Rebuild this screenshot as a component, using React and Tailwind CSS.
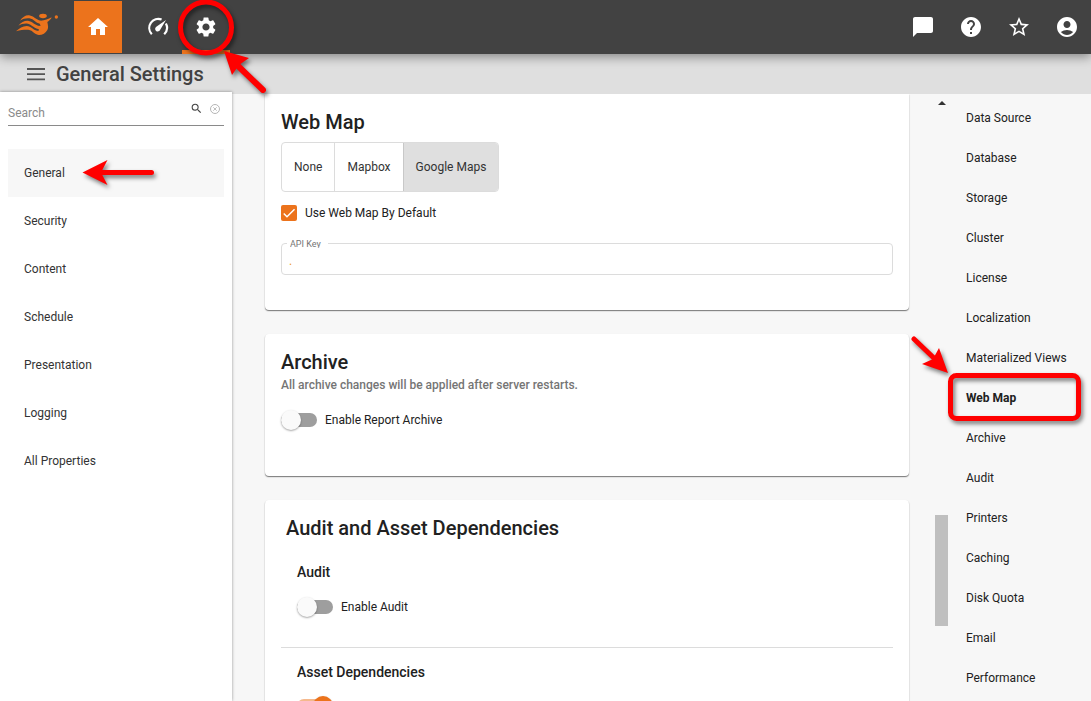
import React from "react";
import {
  MdHome,
  MdSettings,
  MdChatBubble,
  MdHelp,
  MdStarBorder,
  MdAccountCircle,
  MdSearch,
} from "react-icons/md";

const categories = ["General", "Security", "Content", "Schedule", "Presentation", "Logging", "All Properties"];

const sections = [
  "Data Source",
  "Database",
  "Storage",
  "Cluster",
  "License",
  "Localization",
  "Materialized Views",
  "Web Map",
  "Archive",
  "Audit",
  "Printers",
  "Caching",
  "Disk Quota",
  "Email",
  "Performance",
];

const markShadow = "drop-shadow-[2px_3px_2px_rgba(0,0,0,0.5)]";

function Logo() {
  return (
    <svg viewBox="0 0 180 132" className="h-11 w-15" fill="#ec731c" aria-hidden="true">
      <ellipse cx="105" cy="39" rx="11.5" ry="6.5" />
      <circle cx="145" cy="42" r="5" />
      <path d="M36 53C44 42 53 36 63 37C78 39 84 51 98 53L99 63C84 62 78 48 64 46C54 45 46 47 36 53Z" />
      <path d="M31 68C40 57 50 52 60 53C74 55 80 67 96 69L96 79C80 78 72 65 60 62C50 60 40 63 31 68Z" />
      <path d="M24 85C34 76 44 69 56 69C70 70 76 82 90 84L96 96C86 96 80 91 74 86C66 79 50 79 24 85Z" />
      <path d="M95 53C108 54 120 49 131 43C129 49 124 53 118 57C120 68 122 74 118 81C113 90 104 96 92 96L86 84L92 83L93 69L98 68L95 62Z" />
    </svg>
  );
}

function GaugeIcon() {
  return (
    <svg viewBox="0 0 24 24" className="size-6" fill="none" aria-hidden="true">
      <path d="M5.8 19.2A9 9 0 0 1 15.6 4.6M19.9 8.6A9 9 0 0 1 18.2 19.2" stroke="#fff" strokeWidth="2.2" />
      <path d="M20 5L14.2 14.7A2.6 2.6 0 1 1 10.3 11.7Z" fill="#fff" />
    </svg>
  );
}

function Switch({ label, checked = false, labelledBy }) {
  return (
    <label className="flex items-center gap-2 text-xs text-[#212121]">
      <input type="checkbox" role="switch" defaultChecked={checked} aria-labelledby={labelledBy} className="peer sr-only" />
      <span className="flex h-[14px] w-9 items-center rounded-full bg-[#9e9e9e] peer-checked:justify-end peer-checked:bg-[#f5b98d] [&>span]:bg-[#fafafa] peer-checked:[&>span]:bg-[#ec731c]">
        <span className="size-5 shrink-0 rounded-full shadow-[0_1px_2px_rgba(0,0,0,0.35)]" />
      </span>
      {label}
    </label>
  );
}

function Card({ children, className }) {
  return (
    <section className={"shrink-0 bg-white px-4 shadow-[0_1px_1px_rgba(0,0,0,0.45),0_1px_2px_rgba(0,0,0,0.12)] " + className}>
      {children}
    </section>
  );
}

function HeaderBar() {
  return (
    <header className="relative z-20 flex h-[54px] shrink-0 items-center justify-between bg-[#424242] shadow-[0_3px_10px_rgba(0,0,0,0.4)]">
      <div className="flex h-full items-center">
        <div className="flex w-[74px] pb-1 pl-2">
          <Logo />
        </div>
        <button aria-label="Home" className="flex h-[52px] w-12 items-center justify-center bg-[#ec731c] text-white">
          <MdHome className="size-6" />
        </button>
        <button aria-label="Monitoring" className="ml-3 flex h-full w-12 items-center justify-center">
          <GaugeIcon />
        </button>
        <button
          aria-label="Settings"
          className="relative flex h-full w-12 items-center justify-center border-b-4 border-t-4 border-b-[#ec731c] border-t-transparent text-white"
        >
          <MdSettings className="size-6" />
          <svg viewBox="0 0 96 102" className={"pointer-events-none absolute -left-1 -top-1 h-[102px] w-24 max-w-none " + markShadow} aria-hidden="true">
            <circle cx="28" cy="27.5" r="25.5" fill="none" stroke="#f00" strokeWidth="5" />
            <path d="M57 63L85 90" stroke="#f00" strokeWidth="6" strokeLinecap="round" />
            <path d="M46 51L71 58L61 65L54 75Z" fill="#f00" />
          </svg>
        </button>
      </div>
      <div className="flex items-center text-white">
        <button aria-label="Messages" className="flex size-12 items-center justify-center">
          <MdChatBubble className="size-6" />
        </button>
        <button aria-label="Help" className="flex size-12 items-center justify-center">
          <MdHelp className="size-6" />
        </button>
        <button aria-label="Favorites" className="flex size-12 items-center justify-center">
          <MdStarBorder className="size-6" />
        </button>
        <button aria-label="Account" className="flex size-12 items-center justify-center">
          <MdAccountCircle className="size-6" />
        </button>
      </div>
    </header>
  );
}

function Sidebar() {
  return (
    <aside className="z-10 -mt-[2px] w-[232px] shrink-0 bg-white px-2 shadow-[0_0_3px_rgba(0,0,0,0.4)]">
      <div className="flex h-[34px] items-center border-b border-[#8a8a8a]">
        <input
          aria-label="Search"
          placeholder="Search"
          className="min-w-0 flex-1 pt-2 text-xs text-[#212121] outline-none placeholder:text-[#8a8a8a]"
        />
        <button aria-label="Run search" className="text-[#444]">
          <MdSearch className="size-[13px]" />
        </button>
        <button aria-label="Clear search" className="ml-[7px] mr-1">
          <svg viewBox="0 0 10 10" className="size-[10px]" fill="none" stroke="#b5b5b5" aria-hidden="true">
            <circle cx="5" cy="5" r="4.5" strokeWidth="1" />
            <path d="M3.3 3.3L6.7 6.7M6.7 3.3L3.3 6.7" strokeWidth="0.9" />
          </svg>
        </button>
      </div>
      <nav className="mt-[23px] flex flex-col text-xs text-[#333]">
        {categories.map((name, i) => (
          <a key={name} href="#" className={"relative flex h-12 items-center px-4 " + (i === 0 ? "bg-[#f7f7f7]" : "")}>
            {name}
            {i === 0 && (
              <svg viewBox="0 0 80 32" className={"pointer-events-none absolute left-[72px] top-2 h-8 w-20 " + markShadow} aria-hidden="true">
                <path d="M20 15.5H71.5" stroke="#f00" strokeWidth="5" strokeLinecap="round" />
                <path d="M2.5 15.5L27.5 3L21 15.5L27.5 28Z" fill="#f00" />
              </svg>
            )}
          </a>
        ))}
      </nav>
    </aside>
  );
}

function WebMapCard() {
  return (
    <Card className="rounded-b pb-[35px] pt-[14px]">
      <h2 className="text-xl leading-7 font-medium">Web Map</h2>
      <div className="mt-[6px] flex h-[50px] w-fit overflow-hidden rounded border border-[#dcdcdc] text-xs text-[#333]">
        <button className="px-3">None</button>
        <button className="border-l border-[#dcdcdc] px-3">Mapbox</button>
        <button aria-pressed="true" className="border-l border-[#c8c8c8] bg-[#dfdfdf] px-3">Google Maps</button>
      </div>
      <label className="mt-[13px] flex h-4 items-center gap-2 text-xs">
        <input type="checkbox" defaultChecked className="peer sr-only" />
        <span className="flex size-4 items-center justify-center rounded-xs bg-[#ec731c]">
          <svg viewBox="0 0 24 24" className="size-4" aria-hidden="true">
            <path d="M4.1 12.7L9 17.6L20.3 6.3" fill="none" stroke="#fff" strokeWidth="2.2" />
          </svg>
        </span>
        Use Web Map By Default
      </label>
      <fieldset className="mt-4 h-[38px] min-w-0 rounded border border-[#dcdcdc] px-[5px]">
        <legend className="h-3 w-[41px] pt-[2px] pl-[3px]">
          <label htmlFor="api-key" className="block h-[9px] overflow-hidden text-[9px] leading-[10px] text-[#757575]">
            API Key
          </label>
        </legend>
        <input id="api-key" defaultValue="." className="block h-6 w-full px-[2px] text-xs text-[#ec9a1c] outline-none" />
      </fieldset>
    </Card>
  );
}

function ArchiveCard() {
  return (
    <Card className="rounded pb-12 pt-[14px]">
      <h2 className="text-xl leading-7 font-medium">Archive</h2>
      <p className="mt-[1px] mb-[19px] text-xs font-medium text-[#757575]">All archive changes will be applied after server restarts.</p>
      <Switch label="Enable Report Archive" />
    </Card>
  );
}

function AuditCard() {
  return (
    <Card className="rounded pt-[14px]">
      <h2 className="pl-[5px] text-xl leading-7 font-medium">Audit and Asset Dependencies</h2>
      <div className="border-b border-[#dcdcdc] px-4 pt-5 pb-8">
        <h3 className="mb-[17px] text-sm font-medium">Audit</h3>
        <Switch label="Enable Audit" />
      </div>
      <div className="px-4 pt-[14px] pb-8">
        <h3 id="asset-dependencies" className="mb-[17px] text-sm font-medium">Asset Dependencies</h3>
        <Switch checked labelledBy="asset-dependencies" />
      </div>
    </Card>
  );
}

function SectionNav() {
  return (
    <nav className="flex w-[143px] shrink-0 flex-col pt-1 pl-[18px] text-xs">
      {sections.map((name) => {
        const active = name === "Web Map";
        return (
          <a key={name} href="#" className={"relative flex h-10 shrink-0 items-center whitespace-nowrap " + (active ? "font-bold" : "")}>
            {name}
            {active && (
              <svg viewBox="0 0 176 96" className={"pointer-events-none absolute -left-[56px] -top-[47px] h-24 w-44 max-w-none " + markShadow} aria-hidden="true">
                <rect x="40.5" y="44.5" width="128" height="43" rx="6" fill="none" stroke="#f00" strokeWidth="5" />
                <path d="M4 8L27 30" stroke="#f00" strokeWidth="5" strokeLinecap="round" />
                <path d="M38 42L12 33L23 28L29 17Z" fill="#f00" />
              </svg>
            )}
          </a>
        );
      })}
    </nav>
  );
}

export default function App() {
  return (
    <div className="flex h-screen flex-col overflow-hidden bg-[#f7f7f7] font-[Roboto,sans-serif] text-[#212121]">
      <HeaderBar />
      <div className="flex h-10 shrink-0 items-center gap-2 bg-[#dfdfdf] pl-6 text-[#424242]">
        <button aria-label="Toggle menu">
          <svg viewBox="0 0 24 24" className="size-6" fill="none" stroke="#555" strokeWidth="1.8" aria-hidden="true">
            <path d="M3 7H21M3 12.2H21M3 17.4H21" />
          </svg>
        </button>
        <h1 className="text-xl font-medium">General Settings</h1>
      </div>
      <div className="flex min-h-0 flex-1">
        <Sidebar />
        <main className="flex min-w-0 flex-1 flex-col gap-6 overflow-hidden pr-[26px] pl-[33px]">
          <WebMapCard />
          <ArchiveCard />
          <AuditCard />
        </main>
        <div className="flex w-[13px] shrink-0 flex-col items-center pt-[7px]" aria-hidden="true">
          <svg viewBox="0 0 8 4" className="h-1 w-2">
            <path d="M0 4L4 0L8 4Z" fill="#333" />
          </svg>
          <div className="mt-[410px] h-[111px] w-full bg-[#bfbfbf]" />
        </div>
        <SectionNav />
      </div>
    </div>
  );
}
